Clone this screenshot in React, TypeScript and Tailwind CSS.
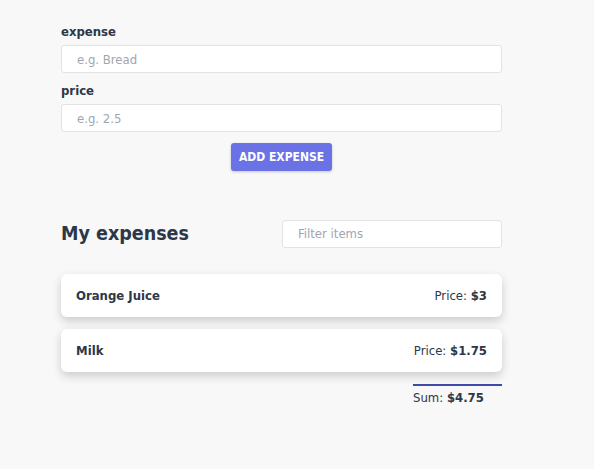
import { useState } from "react"

const items = [
    { name: "Orange Juice", price: "$3" },
    { name: "Milk", price: "$1.75" },
]

export default function App() {
    const [filter, setFilter] = useState("")
    const shown = items.filter((i) => i.name.toLowerCase().includes(filter.toLowerCase()))

    return (
        <div className="min-h-[469px] bg-[#f8f8f8] text-[#2d3748] font-['DejaVu_Sans_Condensed','DejaVu_Sans',sans-serif]">
            <div className="w-[441px] ml-[61px] pt-[24px]">
                <label className="block text-[13px] font-bold leading-[16px] mb-[5px]">expense</label>
                <input
                    className="w-full h-[28px] px-[15px] text-[13px] bg-white border border-[#e2e2e2] rounded-[3px] placeholder:text-[#a0a6b0] outline-none"
                    placeholder="e.g. Bread"
                />
                <label className="block text-[13px] font-bold leading-[16px] mt-[10px] mb-[5px]">price</label>
                <input
                    className="w-full h-[28px] px-[15px] text-[13px] bg-white border border-[#e2e2e2] rounded-[3px] placeholder:text-[#a0a6b0] outline-none"
                    placeholder="e.g. 2.5"
                />
                <div className="flex justify-center mt-[11px]">
                    <button className="h-[28px] w-[101px] rounded-[3px] bg-[#6a72e5] text-white text-[12px] font-bold shadow-[0_1px_3px_rgba(0,0,0,0.2)]">
                        ADD EXPENSE
                    </button>
                </div>

                <div className="flex items-center justify-between mt-[48px]">
                    <h2 className="text-[19.5px] font-bold">My expenses</h2>
                    <input
                        className="w-[220px] h-[28px] px-[15px] text-[13px] bg-white border border-[#e2e2e2] rounded-[3px] placeholder:text-[#a0a6b0] outline-none"
                        placeholder="Filter items"
                        value={filter}
                        onChange={(e) => setFilter(e.target.value)}
                    />
                </div>

                <ul className="mt-[26px] flex flex-col gap-[12px]">
                    {shown.map((item) => (
                        <li
                            key={item.name}
                            className="flex items-center justify-between h-[43px] px-[15px] bg-white rounded-[6px] shadow-[0_4px_10px_rgba(0,0,0,0.18)] text-[13px]"
                        >
                            <span className="font-bold">{item.name}</span>
                            <span>
                                Price: <span className="font-bold">{item.price}</span>
                            </span>
                        </li>
                    ))}
                </ul>

                <div className="flex justify-end mt-[12px]">
                    <div className="w-[89px] border-t-2 border-[#3f4aa8] pt-[3px] text-[13px] leading-[18px]">
                        Sum: <span className="font-bold">$4.75</span>
                    </div>
                </div>
            </div>
        </div>
    )
}
